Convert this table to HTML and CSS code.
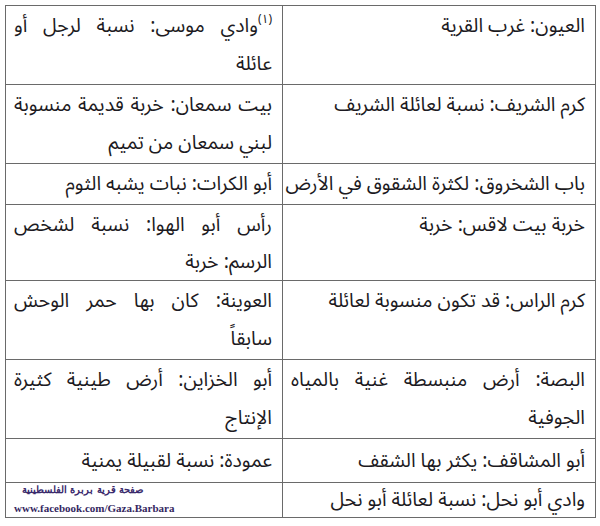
FILE: index.html
```html
<!DOCTYPE html>
<html lang="ar" dir="rtl">
<head>
<meta charset="utf-8">
<link rel="stylesheet" href="styles.css">
</head>
<body>
<table class="names">
  <tr class="two">
    <td class="col-r"><span class="ln">العيون: غرب القرية</span></td>
    <td class="col-l"><span class="ln full"><sup class="note">(١)</sup>وادي موسى: نسبة لرجل أو</span><span class="ln">عائلة</span></td>
  </tr>
  <tr class="two">
    <td class="col-r"><span class="ln">كرم الشريف: نسبة لعائلة الشريف</span></td>
    <td class="col-l"><span class="ln full">بيت سمعان: خربة قديمة منسوبة</span><span class="ln">لبني سمعان من تميم</span></td>
  </tr>
  <tr>
    <td class="col-r"><span class="ln">باب الشخروق: لكثرة الشقوق في الأرض</span></td>
    <td class="col-l"><span class="ln">أبو الكرات: نبات يشبه الثوم</span></td>
  </tr>
  <tr class="short">
    <td class="col-r"><span class="ln">خربة بيت لاقس: خربة</span></td>
    <td class="col-l"><span class="ln full">رأس أبو الهوا: نسبة لشخص</span><span class="ln">الرسم: خربة</span></td>
  </tr>
  <tr class="two">
    <td class="col-r"><span class="ln">كرم الراس: قد تكون منسوبة لعائلة</span></td>
    <td class="col-l"><span class="ln full">العوينة: كان بها حمر الوحش</span><span class="ln">سابقاً</span></td>
  </tr>
  <tr class="two">
    <td class="col-r"><span class="ln full">البصة: أرض منبسطة غنية بالمياه</span><span class="ln">الجوفية</span></td>
    <td class="col-l"><span class="ln full">أبو الخزاين: أرض طينية كثيرة</span><span class="ln">الإنتاج</span></td>
  </tr>
  <tr class="tall">
    <td class="col-r"><span class="ln">أبو المشاقف: يكثر بها الشقف</span></td>
    <td class="col-l"><span class="ln">عمودة: نسبة لقبيلة يمنية</span></td>
  </tr>
  <tr class="last">
    <td class="col-r"><span class="ln">وادي أبو نحل: نسبة لعائلة أبو نحل</span></td>
    <td class="col-l wm">
      <div class="wm-ar">صفحة قرية بربرة الفلسطينية</div>
      <div class="wm-url" dir="ltr">www.facebook.com/Gaza.Barbara</div>
    </td>
  </tr>
</table>
</body>
</html>
```

FILE: styles.css
```css
html, body {
  margin: 0;
  padding: 0;
  background: #ffffff;
}
body {
  padding: 5px 4px 0 5px;
  font-family: "Noto Sans Arabic", "DejaVu Sans", sans-serif;
  color: #1c1a22;
}
.names {
  border-collapse: collapse;
  width: 591px;
  table-layout: fixed;
}
.names td {
  border: 1px solid #6a6a6a;
  vertical-align: top;
  padding: 1px 10px 1px 8px;
  font-size: 19.5px;
  line-height: 38px;
  height: 38px;
}
.names .short td {
  line-height: 37px;
  height: 37px;
  padding-bottom: 0;
}
.names .tall td {
  line-height: 41px;
  height: 41px;
}
.names .last td {
  line-height: 33px;
  height: 33px;
  padding-top: 0;
}
.col-r { width: 294px; }
.col-l { width: 258px; }
.ln {
  display: block;
  white-space: nowrap;
  text-align: right;
}
.ln.full {
  text-align: justify;
  text-align-last: justify;
}
.note {
  font-size: 12px;
  line-height: 0;
  vertical-align: 9px;
}
.names .last td.wm {
  padding: 0 8px;
  line-height: 1;
}
.wm-ar {
  font-family: "DejaVu Serif", serif;
  font-size: 10px;
  line-height: 12px;
  font-weight: bold;
  color: #3a2a6c;
  text-align: left;
  white-space: nowrap;
  margin-top: 1px;
  padding-left: 8px;
}
.wm-url {
  font-family: "Liberation Serif", serif;
  font-weight: bold;
  font-size: 11px;
  line-height: 13px;
  color: #35285f;
  text-align: left;
  white-space: nowrap;
  margin-top: 6px;
}
```
